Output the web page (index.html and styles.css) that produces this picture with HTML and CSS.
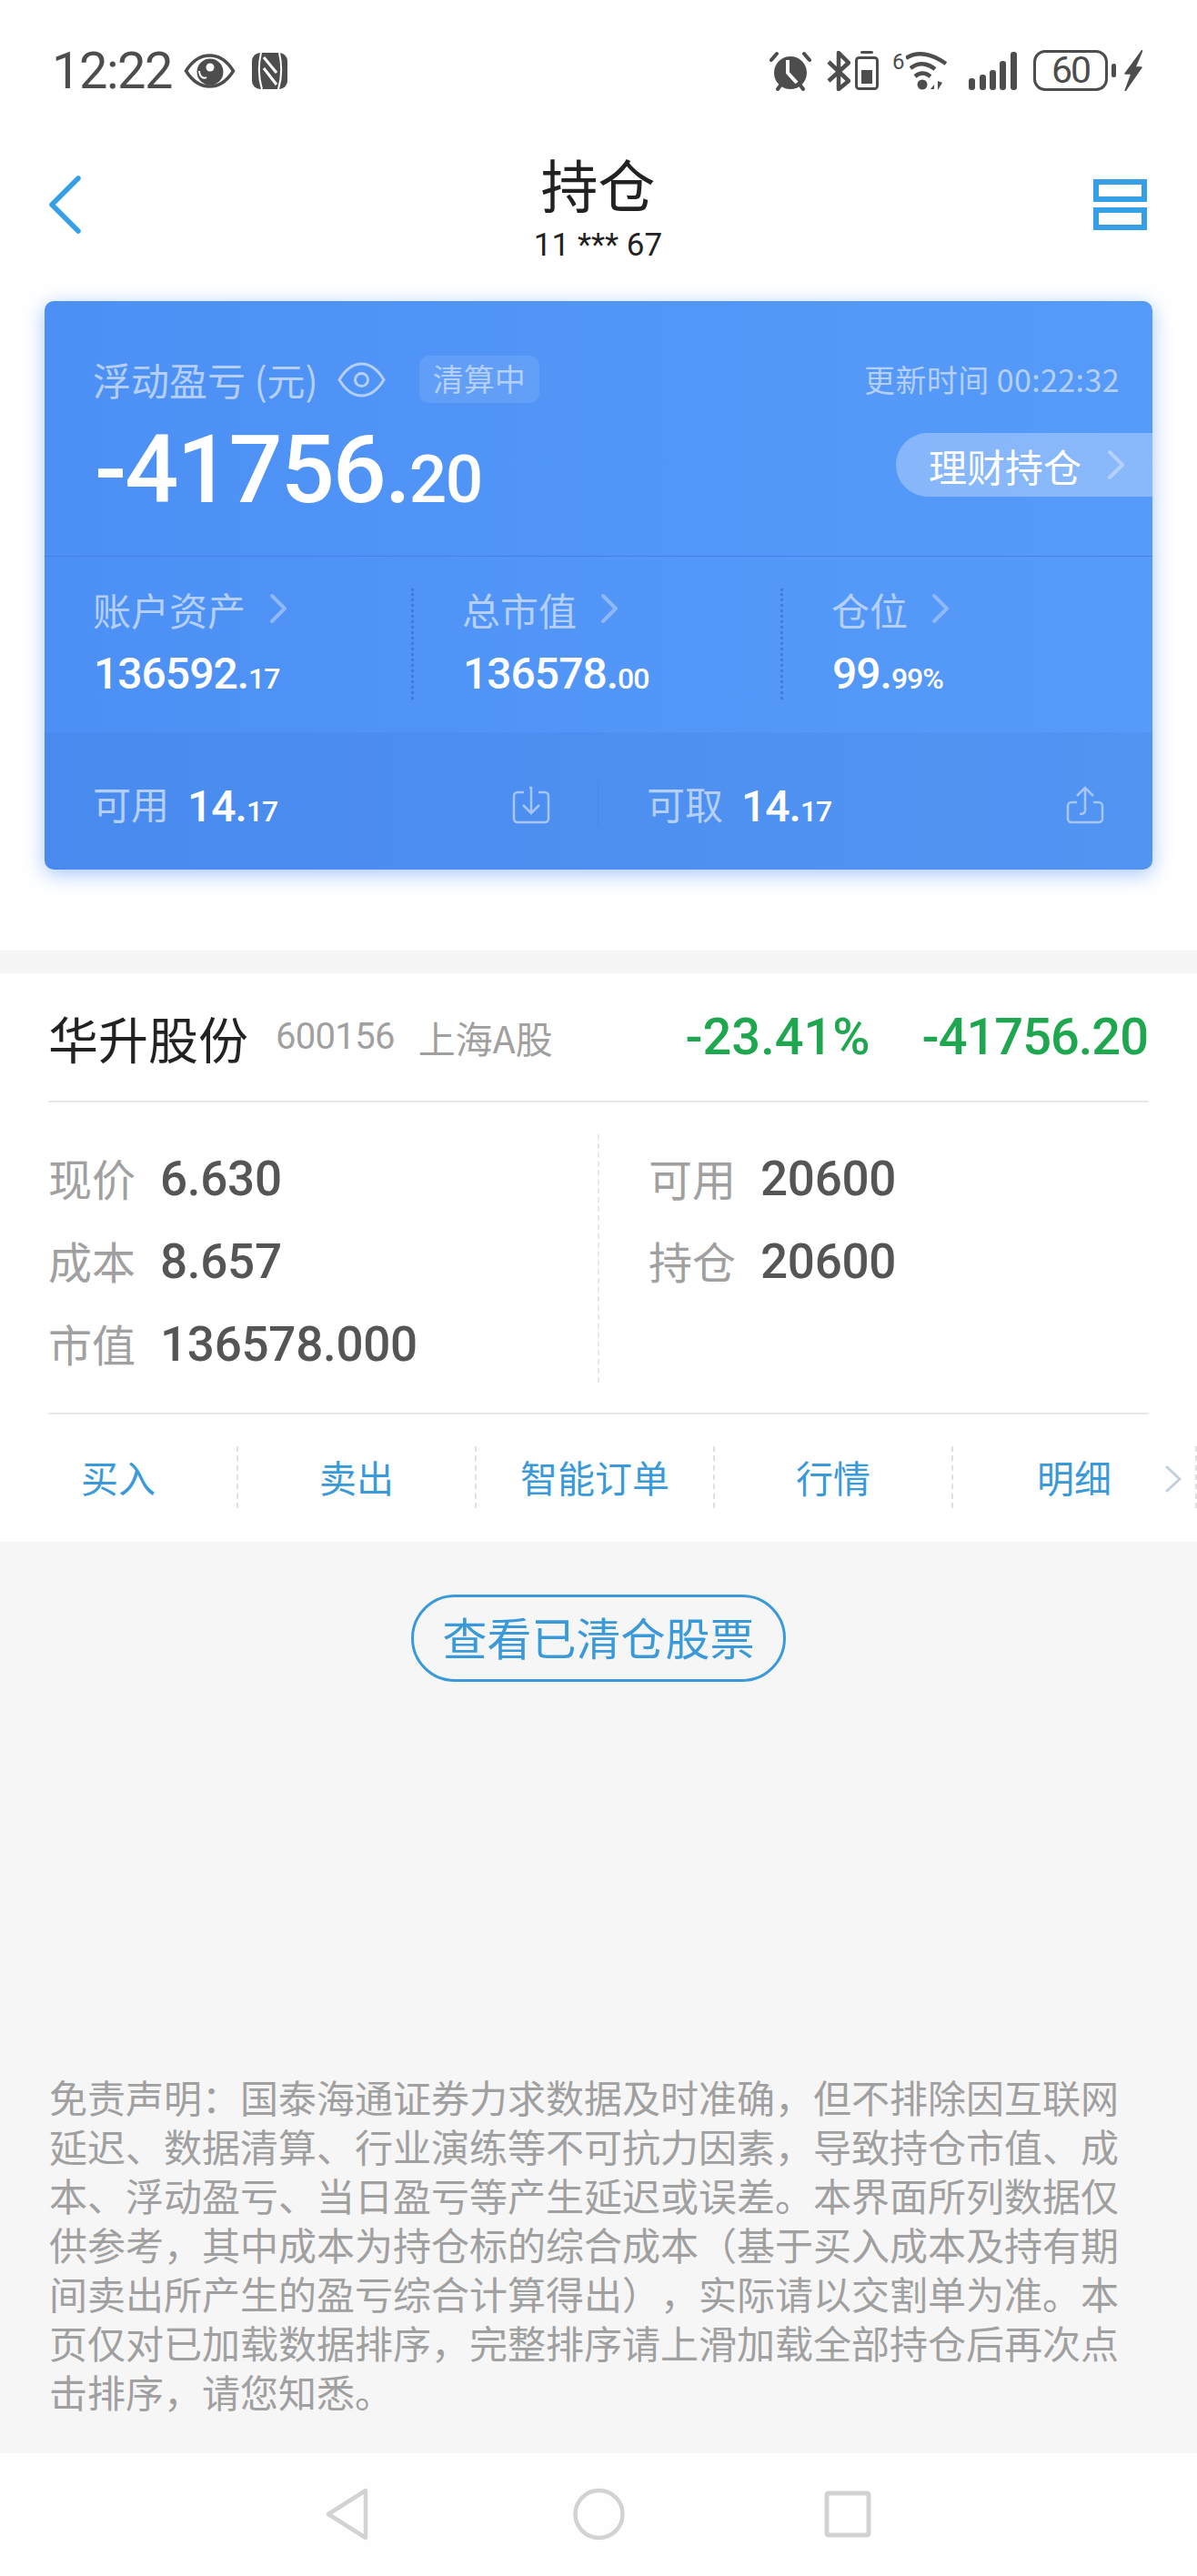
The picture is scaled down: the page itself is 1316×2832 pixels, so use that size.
FILE: index.html
```html
<!DOCTYPE html>
<html lang="zh-CN">
<head>
<meta charset="utf-8">
<title>持仓</title>
<link rel="stylesheet" href="styles.css">
</head>
<body>
<div class="page">
  <header class="status">
    <div class="status-left">
      <span class="clock">12:22</span>
      <svg class="ic-eye" viewBox="0 0 57 38"><path d="M2.500 19C10 7 19 2 28.500 2S47 7 54.500 19C47 31 38 36 28.500 36S10 31 2.500 19Z" fill="none" stroke="#4d4d4d" stroke-width="3.500"/><circle cx="29" cy="20" r="14.500" fill="#4d4d4d"/><path d="M17 19C17.500 26 22 28 25 26" fill="none" stroke="#fff" stroke-width="2"/><circle cx="29" cy="15" r="4.500" fill="#fff"/></svg>
      <svg class="ic-nfc" viewBox="0 0 39 40"><rect width="39" height="40" rx="9" fill="#4d4d4d"/><path d="M10 0C7 13 7 27 11 40M30 0C33 13 33 27 29 40" fill="none" stroke="#fff" stroke-width="2"/><path d="M13 5L27 22M13 17L27 35" fill="none" stroke="#fff" stroke-width="3"/></svg>
    </div>
    <div class="status-right">
      <svg class="ic-alarm" viewBox="0 0 46 44"><circle cx="23" cy="24" r="18" fill="#4d4d4d"/><path d="M2 10L8 3M44 10L38 3M9 42L12 38M37 42L34 38" stroke="#4d4d4d" stroke-width="4" stroke-linecap="round"/><path d="M20 10V24L30 35" fill="none" stroke="#fff" stroke-width="4"/></svg>
      <svg class="ic-bt" viewBox="0 0 26 44"><path d="M2 12L24 33L13 42V2L24 13L2 33" fill="none" stroke="#4d4d4d" stroke-width="4.500" stroke-linejoin="round"/></svg>
      <svg class="ic-cell" viewBox="0 0 26 43"><rect x="6" y="0" width="14" height="3" rx="1.500" fill="#4d4d4d"/><rect x="1.500" y="7.500" width="23" height="34" rx="3" fill="none" stroke="#4d4d4d" stroke-width="3"/><rect x="7" y="21" width="12" height="15" fill="#4d4d4d"/></svg>
      <div class="wifi">
        <span class="wifi-six">6</span>
        <svg class="ic-wifi" viewBox="15 0 45 45"><path d="M15 9Q33 -3 59 15M20 20Q33 10 47 21M25 29Q33 22 42 29" fill="none" stroke="#4d4d4d" stroke-width="4.500"/><circle cx="33" cy="38" r="5.500" fill="#4d4d4d"/><path d="M46 38L42 43H46ZM50 34V44L55 36Z" fill="#4d4d4d"/></svg>
      </div>
      <svg class="ic-signal" viewBox="0 0 53 42"><rect x="0" y="29" width="7" height="13" rx="3" fill="#4d4d4d"/><rect x="12" y="25" width="7" height="17" rx="3" fill="#4d4d4d"/><rect x="23" y="20" width="7" height="22" rx="3" fill="#4d4d4d"/><rect x="34" y="10" width="7" height="32" rx="3" fill="#4d4d4d"/><rect x="46" y="0" width="7" height="42" rx="3" fill="#4d4d4d"/></svg>
      <div class="battery"><span class="battery-box">60</span><span class="battery-nub"></span></div>
      <svg class="ic-bolt" viewBox="0 0 20 45"><path d="M20 0L1 26H8L1 45L19 19H12Z" fill="#4d4d4d" stroke="#4d4d4d" stroke-width="1.500" stroke-linejoin="round"/></svg>
    </div>
  </header>

  <nav class="nav">
    <svg class="ic-back" viewBox="0 0 35 64"><path d="M32 3L3 32L32 61" fill="none" stroke="#35a0e6" stroke-width="5.500" stroke-linecap="round" stroke-linejoin="round"/></svg>
    <div class="title-wrap">
      <h1 class="title">持仓</h1>
      <div class="subtitle">11 *** 67</div>
    </div>
    <svg class="ic-menu" viewBox="0 0 59 56"><rect x="3" y="3" width="53" height="19" fill="none" stroke="#35a0e6" stroke-width="6"/><rect x="3" y="34" width="53" height="19" fill="none" stroke="#35a0e6" stroke-width="6"/></svg>
  </nav>

  <section class="card">
    <div class="card-top">
      <div class="pnl-head">
        <div class="pnl-label">
          <span class="muted-40">浮动盈亏 (元)</span>
          <svg class="ic-card-eye" viewBox="0 0 53 39"><path d="M2 19.500C9 8 17 2 26.500 2S44 8 51 19.500C44 31 36 37 26.500 37S9 31 2 19.500Z" fill="none" stroke="#b4cffb" stroke-width="3"/><circle cx="26.500" cy="19.500" r="7" fill="none" stroke="#b4cffb" stroke-width="3"/></svg>
          <span class="badge">清算中</span>
        </div>
        <span class="update">更新时间 00:22:32</span>
      </div>
      <div class="pnl-row">
        <div class="pnl-value">-41756.<span class="pnl-dec">20</span></div>
        <div class="pill">
          <span>理财持仓</span>
          <svg class="ic-chev" viewBox="0 0 20 34"><path d="M3 3L17 17L3 31" fill="none" stroke="#b4d0fc" stroke-width="4" stroke-linecap="round" stroke-linejoin="round"/></svg>
        </div>
      </div>
    </div>
    <div class="stats">
      <div class="stat">
        <div class="stat-label"><span>账户资产</span><svg class="ic-chev" viewBox="0 0 20 34"><path d="M3 3L17 17L3 31" fill="none" stroke="#8fb8f8" stroke-width="4" stroke-linecap="round" stroke-linejoin="round"/></svg></div>
        <div class="stat-value">136592.<span class="stat-dec">17</span></div>
      </div>
      <div class="stat">
        <div class="stat-label"><span>总市值</span><svg class="ic-chev" viewBox="0 0 20 34"><path d="M3 3L17 17L3 31" fill="none" stroke="#8fb8f8" stroke-width="4" stroke-linecap="round" stroke-linejoin="round"/></svg></div>
        <div class="stat-value">136578.<span class="stat-dec">00</span></div>
      </div>
      <div class="stat stat-last">
        <div class="stat-label"><span>仓位</span><svg class="ic-chev" viewBox="0 0 20 34"><path d="M3 3L17 17L3 31" fill="none" stroke="#8fb8f8" stroke-width="4" stroke-linecap="round" stroke-linejoin="round"/></svg></div>
        <div class="stat-value">99.<span class="stat-dec">99%</span></div>
      </div>
    </div>
    <div class="funds">
      <div class="fund fund-first">
        <span class="muted-40 fund-label">可用</span>
        <span class="fund-value">14.<span class="fund-dec">17</span></span>
        <svg class="ic-fund" viewBox="0 0 42 42"><path d="M13 7H6A4 4 0 0 0 2 11V36A4 4 0 0 0 6 40H36A4 4 0 0 0 40 36V11A4 4 0 0 0 36 7H29" fill="none" stroke="#a7c6f8" stroke-width="2.500"/><path d="M19 2H21V29M12 21L21 30L30 21" fill="none" stroke="#a7c6f8" stroke-width="2.500"/></svg>
      </div>
      <div class="fund">
        <span class="muted-40 fund-label">可取</span>
        <span class="fund-value">14.<span class="fund-dec">17</span></span>
        <svg class="ic-fund" viewBox="0 0 42 42"><path d="M12 18H6A4 4 0 0 0 2 22V36A4 4 0 0 0 6 40H36A4 4 0 0 0 40 36V22A4 4 0 0 0 36 18H30" fill="none" stroke="#a7c6f8" stroke-width="2.500"/><path d="M12 11L21 2L30 11M21 2V27Q21 31 15 31" fill="none" stroke="#a7c6f8" stroke-width="2.500"/></svg>
      </div>
    </div>
  </section>

  <div class="strip"></div>

  <section class="stock">
    <div class="stock-head">
      <div class="stock-id">
        <span class="stock-name">华升股份</span>
        <span class="stock-code">600156</span>
        <span class="stock-market">上海A股</span>
      </div>
      <div class="stock-pnl">
        <span class="stock-rate">-23.41%</span>
        <span>-41756.20</span>
      </div>
    </div>
    <div class="details">
      <div class="detail-col detail-left">
        <div class="detail"><span class="detail-k">现价</span><span class="detail-v">6.630</span></div>
        <div class="detail"><span class="detail-k">成本</span><span class="detail-v">8.657</span></div>
        <div class="detail"><span class="detail-k">市值</span><span class="detail-v">136578.000</span></div>
      </div>
      <div class="detail-col detail-right">
        <div class="detail"><span class="detail-k">可用</span><span class="detail-v">20600</span></div>
        <div class="detail"><span class="detail-k">持仓</span><span class="detail-v">20600</span></div>
      </div>
    </div>
    <div class="actions">
      <div class="action">买入</div>
      <div class="action">卖出</div>
      <div class="action">智能订单</div>
      <div class="action">行情</div>
      <div class="action action-last">明细<svg class="ic-more" viewBox="0 0 20 30"><path d="M3 2L17 15L3 28" fill="none" stroke="#c2cfdc" stroke-width="3" stroke-linecap="round" stroke-linejoin="round"/></svg></div>
    </div>
  </section>

  <main class="lower">
    <div class="cleared">查看已清仓股票</div>
    <p class="disclaimer">免责声明&#xFF1A;国泰海通证券力求数据及时准确&#xFF0C;但不排除因互联网延迟、数据清算、行业演练等不可抗力因素&#xFF0C;导致持仓市值、成本、浮动盈亏、当日盈亏等产生延迟或误差。本界面所列数据仅供参考&#xFF0C;其中成本为持仓标的综合成本&#xFF08;基于买入成本及持有期间卖出所产生的盈亏综合计算得出&#xFF09;&#xFF0C;实际请以交割单为准。本页仅对已加载数据排序&#xFF0C;完整排序请上滑加载全部持仓后再次点击排序&#xFF0C;请您知悉。</p>
  </main>

  <footer class="softkeys">
    <svg class="key-back" viewBox="0 0 47 58"><path d="M44 3V55L3 29Z" fill="none" stroke="#d2d2d2" stroke-width="4.500" stroke-linejoin="round"/></svg>
    <svg class="key-home" viewBox="0 0 57 58"><circle cx="28.500" cy="29" r="26" fill="none" stroke="#d2d2d2" stroke-width="4.500"/></svg>
    <svg class="key-recent" viewBox="0 0 52 52"><rect x="3" y="3" width="46" height="46" rx="2" fill="none" stroke="#d2d2d2" stroke-width="5"/></svg>
  </footer>
</div>
</body>
</html>
```

FILE: styles.css
```css
* { box-sizing: border-box; }
html, body { margin: 0; padding: 0; }
body {
  background: #fff;
  font-family: "Noto Sans CJK SC", Roboto, sans-serif;
}
.page {
  width: 1316px;
  height: 2832px;
  display: flex;
  flex-direction: column;
  overflow: hidden;
}
svg { display: block; flex: none; }

/* status bar */
.status {
  height: 110px;
  padding: 55px 60px 0 57px;
  display: flex;
  justify-content: space-between;
  align-items: flex-start;
}
.status-left { display: flex; align-items: center; height: 45px; }
.clock {
  font: 400 56px/47px Roboto, sans-serif;
  letter-spacing: -1.500px;
  color: #4d4d4d;
  width: 145px;
  padding-top: 2px;
}
.ic-eye { width: 57px; height: 38px; }
.ic-nfc { width: 39px; height: 40px; margin-left: 18px; }
.status-right { display: flex; align-items: center; height: 45px; }
.ic-alarm { width: 46px; height: 44px; }
.ic-bt { width: 26px; height: 44px; margin-left: 17px; }
.ic-cell { width: 26px; height: 43px; margin-left: 5px; }
.wifi { display: flex; width: 60px; height: 45px; margin-left: 15px; }
.wifi-six {
  width: 15px;
  font: 400 24px/26px Roboto, sans-serif;
  letter-spacing: -1px;
  color: #4d4d4d;
}
.ic-wifi { width: 45px; height: 45px; }
.ic-signal { width: 53px; height: 42px; margin-left: 24px; }
.battery { display: flex; align-items: center; margin-left: 18px; }
.battery-box {
  width: 82px;
  height: 45px;
  border: 3px solid #4d4d4d;
  border-radius: 13px;
  font: 400 41px/39px Roboto, sans-serif;
  letter-spacing: -2px;
  color: #4d4d4d;
  text-align: center;
}
.battery-nub {
  width: 5px;
  height: 15px;
  margin-left: 4px;
  border-radius: 2px;
  background: #4d4d4d;
}
.ic-bolt { width: 20px; height: 45px; margin-left: 9px; }

/* nav */
.nav {
  height: 221px;
  padding: 56px 55px 0 54px;
  display: grid;
  grid-template-columns: 1fr auto 1fr;
  align-items: start;
}
.ic-back { width: 35px; height: 64px; margin-top: 27px; }
.title-wrap { text-align: center; }
.title {
  margin: 0;
  font-size: 63px;
  line-height: 70px;
  font-weight: 400;
  color: #222;
}
.subtitle {
  margin-top: 19px;
  font: 400 35px/30px Roboto, sans-serif;
  color: #222;
}
.ic-menu { width: 59px; height: 56px; margin-top: 31px; justify-self: end; }

/* card */
.card {
  width: 1218px;
  height: 625px;
  margin: 0 49px 89px;
  border-radius: 10px;
  overflow: hidden;
  background: linear-gradient(90deg, #4d90f5, #569bf9);
  box-shadow: 0 5px 22px rgba(77, 144, 244, .5);
  display: flex;
  flex-direction: column;
}
.muted-40 {
  font-size: 42px;
  line-height: 44px;
  color: #b4cffb;
}
.card-top { height: 280px; padding: 60px 0 0 53px; }
.pnl-head {
  display: flex;
  justify-content: space-between;
  align-items: center;
  height: 52px;
  padding-right: 36px;
}
.pnl-label { display: flex; align-items: center; }
.ic-card-eye { width: 53px; height: 39px; margin-left: 21px; }
.badge {
  height: 52px;
  padding: 0 15px;
  margin-left: 37px;
  border-radius: 10px;
  background: rgba(255, 255, 255, .1);
  color: #b4cffb;
  font-size: 34px;
  line-height: 50px;
}
.update { font-size: 34px; line-height: 40px; letter-spacing: .4px; color: #b4cffb; }
.pnl-row {
  display: flex;
  justify-content: space-between;
  align-items: center;
  height: 70px;
  margin-top: 33px;
}
.pnl-value {
  font: 500 104px/70px Roboto, sans-serif;
  letter-spacing: -2px;
  color: #fff;
  margin-left: 2px;
  padding-top: 21px;
}
.pnl-dec { font-size: 73px; letter-spacing: -1.500px; }
.pill {
  width: 282px;
  height: 70px;
  padding-left: 36px;
  border-radius: 35px 0 0 35px;
  background: rgba(255, 255, 255, .3);
  display: flex;
  align-items: center;
  font-size: 42px;
  color: #fff;
}
.pill .ic-chev { margin-left: 28px; }
.ic-chev { width: 20px; height: 34px; }

.stats {
  height: 194px;
  border-top: 1px solid rgba(50, 110, 220, .5);
  display: grid;
  grid-template-columns: repeat(3, 1fr);
}
.stat {
  height: 122px;
  margin-top: 35px;
  padding-left: 53px;
  border-right: 3px dotted rgba(45, 100, 205, .55);
}
.stat-last { border-right: 0; }
.stat-label {
  display: flex;
  align-items: center;
  gap: 26px;
  height: 44px;
  font-size: 42px;
  color: #b4cffb;
}
.stat-value {
  margin-top: 28px;
  margin-left: 1px;
  font: 500 48px/44px Roboto, sans-serif;
  letter-spacing: -1px;
  color: #fff;
}
.stat-dec { font-size: 32px; letter-spacing: -1px; }

.funds {
  height: 151px;
  padding-top: 8px;
  display: grid;
  grid-template-columns: 1fr 1fr;
  background: rgba(20, 50, 140, .06);
}
.fund {
  display: flex;
  align-items: center;
  padding: 0 53px;
  position: relative;
}
.fund-first::after {
  content: "";
  position: absolute;
  right: 0;
  top: 45px;
  height: 50px;
  width: 1px;
  background: rgba(40, 100, 210, .2);
}
.fund-label { margin-bottom: 4px; }
.fund-value {
  margin-left: 20px;
  margin-top: 10px;
  font: 500 48px/44px Roboto, sans-serif;
  letter-spacing: -1px;
  color: #fff;
}
.fund-dec { font-size: 32px; letter-spacing: -1px; }
.ic-fund { width: 42px; height: 42px; margin-left: auto; }

.strip { height: 25px; background: #f5f5f5; flex: none; }

/* stock */
.stock { flex: none; }
.stock-head {
  height: 142px;
  margin: 0 53px;
  padding: 0 1px 0 0;
  border-bottom: 2px solid #e9e9e9;
  display: flex;
  justify-content: space-between;
  align-items: center;
}
.stock-id { display: flex; align-items: center; }
.stock-name { font-size: 55px; line-height: 60px; color: #222; }
.stock-code {
  margin-left: 30px;
  font: 400 40px/50px Roboto, sans-serif;
  letter-spacing: -.700px;
  color: #a0a0a0;
}
.stock-market { margin-left: 26px; font-size: 41px; line-height: 50px; color: #a0a0a0; }
.stock-pnl {
  display: flex;
  gap: 57px;
  font: 500 56px/60px Roboto, sans-serif;
  letter-spacing: -1px;
  color: #1fa750;
}
.stock-rate { letter-spacing: 0; }
.details {
  height: 343px;
  margin: 0 53px;
  padding-top: 35px;
  border-bottom: 2px solid #e9e9e9;
  display: flex;
}
.detail-col {
  height: 273px;
  padding-top: 3px;
  display: grid;
  grid-auto-rows: 91px;
}
.detail-left {
  width: 606px;
  border-right: 2px dashed #e8e8e8;
}
.detail-right { padding-left: 54px; }
.detail { display: flex; align-items: center; }
.detail-k { font-size: 48px; line-height: 60px; margin-bottom: 4px; color: #a0a0a0; }
.detail-v {
  margin-left: 27px;
  font: 500 53px/60px Roboto, sans-serif;
  letter-spacing: -.300px;
  color: #555;
}
.actions {
  height: 140px;
  padding-top: 35px;
  display: grid;
  grid-template-columns: repeat(4, 262px) 1fr;
}
.action {
  height: 68px;
  border-right: 2px dashed #e0e0e0;
  font-size: 41px;
  line-height: 66px;
  color: #3a9ad9;
  text-align: center;
}
.action-last { position: relative; }
.ic-more {
  position: absolute;
  left: 232px;
  top: 21px;
  width: 20px;
  height: 30px;
}

/* lower */
.lower {
  height: 1002px;
  flex: none;
  background: #f6f6f6;
  display: flex;
  flex-direction: column;
  align-items: center;
}
.cleared {
  width: 412px;
  height: 96px;
  margin-top: 58px;
  border: 3.500px solid #3a9ad9;
  border-radius: 48px;
  font-size: 49px;
  line-height: 86px;
  color: #3a9ad9;
  text-align: center;
}
.disclaimer {
  width: 1208px;
  margin: auto 0 0;
  padding: 0 0 41px;
  font-size: 42px;
  line-height: 54px;
  text-spacing-trim: space-all;
  color: #a0a0a0;
}

/* soft keys */
.softkeys {
  height: 134px;
  flex: none;
  background: #fefefe;
  display: flex;
  align-items: center;
  padding-left: 358px;
}
.key-back { width: 47px; height: 58px; }
.key-home { width: 57px; height: 58px; margin-left: 225px; }
.key-recent { width: 52px; height: 52px; margin-left: 219px; }
```
